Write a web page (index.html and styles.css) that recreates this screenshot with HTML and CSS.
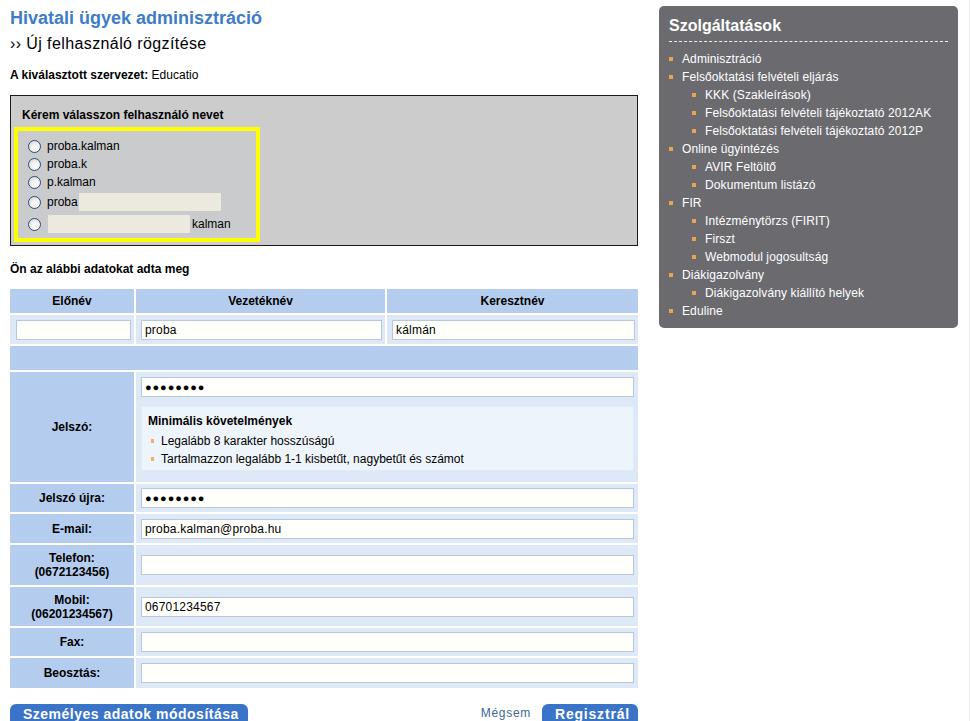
FILE: index.html
```html
<!DOCTYPE html>
<html lang="hu">
<head>
<meta charset="utf-8">
<title>Hivatali ügyek adminisztráció</title>
<link rel="stylesheet" href="styles.css">
</head>
<body>
<div class="page">
  <main class="main">
    <h1 class="title">Hivatali ügyek adminisztráció</h1>
    <h2 class="subtitle">›› Új felhasználó rögzítése</h2>
    <p class="org"><b>A kiválasztott szervezet:</b> Educatio</p>

    <section class="choose">
      <h3 class="choose-title">Kérem válasszon felhasználó nevet</h3>
      <div class="yellow">
        <div class="opt"><span class="radio"></span>proba.kalman</div>
        <div class="opt"><span class="radio"></span>proba.k</div>
        <div class="opt"><span class="radio"></span>p.kalman</div>
        <div class="opt opt-4"><span class="radio"></span>proba<span class="fill"></span></div>
        <div class="opt opt-5"><span class="radio"></span><span class="fill"></span>kalman</div>
      </div>
    </section>

    <h3 class="given">Ön az alábbi adatokat adta meg</h3>

    <div class="form">
      <div class="hd">Előnév</div>
      <div class="hd">Vezetéknév</div>
      <div class="hd">Keresztnév</div>

      <div class="cell row-name"><span class="inp"></span></div>
      <div class="cell row-name"><span class="inp">proba</span></div>
      <div class="cell row-name"><span class="inp">kálmán</span></div>

      <div class="spacer"></div>

      <div class="lbl row-pass">Jelszó:</div>
      <div class="val row-pass">
        <span class="inp dots">●●●●●●●●</span>
        <div class="req">
          <div class="req-title">Minimális követelmények</div>
          <ul class="req-list">
            <li>Legalább 8 karakter hosszúságú</li>
            <li>Tartalmazzon legalább 1-1 kisbetűt, nagybetűt és számot</li>
          </ul>
        </div>
      </div>

      <div class="lbl r28">Jelszó újra:</div>
      <div class="val r28"><span class="inp dots">●●●●●●●●</span></div>

      <div class="lbl r29">E-mail:</div>
      <div class="val r29"><span class="inp">proba.kalman@proba.hu</span></div>

      <div class="lbl r40">Telefon:<br>(0672123456)</div>
      <div class="val r40"><span class="inp"></span></div>

      <div class="lbl r39">Mobil:<br>(06201234567)</div>
      <div class="val r39"><span class="inp">06701234567</span></div>

      <div class="lbl r28">Fax:</div>
      <div class="val r28"><span class="inp"></span></div>

      <div class="lbl r30">Beosztás:</div>
      <div class="val r30"><span class="inp"></span></div>
    </div>

    <div class="actions">
      <span class="btn btn-wide">Személyes adatok módosítása</span>
      <span class="spring"></span>
      <a class="cancel">Mégsem</a>
      <span class="btn btn-reg">Regisztrál</span>
    </div>
  </main>

  <aside class="side">
    <h2 class="side-title">Szolgáltatások</h2>
    <ul class="menu">
      <li>Adminisztráció</li>
      <li>Felsőoktatási felvételi eljárás
        <ul>
          <li>KKK (Szakleírások)</li>
          <li>Felsőoktatási felvételi tájékoztató 2012AK</li>
          <li>Felsőoktatási felvételi tájékoztató 2012P</li>
        </ul>
      </li>
      <li>Online ügyintézés
        <ul>
          <li>AVIR Feltöltő</li>
          <li>Dokumentum listázó</li>
        </ul>
      </li>
      <li>FIR
        <ul>
          <li>Intézménytörzs (FIRIT)</li>
          <li>Firszt</li>
          <li>Webmodul jogosultság</li>
        </ul>
      </li>
      <li>Diákigazolvány
        <ul>
          <li>Diákigazolvány kiállító helyek</li>
        </ul>
      </li>
      <li>Eduline</li>
    </ul>
  </aside>
</div>
</body>
</html>
```

FILE: styles.css
```css
* { box-sizing: border-box; }
html, body { margin: 0; padding: 0; background: #fff; }
body {
  font-family: "Liberation Sans", Arial, sans-serif;
  font-size: 12px;
  color: #000;
  overflow: hidden;
}
.page {
  display: flex;
  align-items: flex-start;
  gap: 21px;
  padding: 6px 0 0 10px;
  height: 721px;
  border-right: 1px solid #ececec;
  width: 970px;
}
.main { width: 628px; flex: none; }

.title {
  margin: 2px 0 0;
  font-size: 18px;
  font-weight: bold;
  color: #3d7cc9;
  line-height: 21px;
}
.subtitle {
  margin: 5px 0 0;
  font-size: 16px;
  font-weight: normal;
  letter-spacing: 0.4px;
  line-height: 19px;
  color: #000;
}
.org { margin: 15px 0 0; line-height: 14px; }

.choose {
  margin-top: 13px;
  height: 151px;
  background: #cccccc;
  border: 1px solid #1a1a1a;
  padding: 12px 3px 0 3px;
}
.choose-title {
  margin: 0 0 0 8px;
  font-size: 12px;
  font-weight: bold;
  line-height: 14px;
}
.yellow {
  margin-top: 5px;
  width: 246px;
  height: 115px;
  border: 4px solid #ffff00;
  background: #c9cbcd;
  padding: 6px 0 0 10px;
}
.opt {
  display: flex;
  align-items: center;
  height: 18px;
  line-height: 14px;
}
.opt-4 { height: 20px; margin-top: 1px; }
.opt-5 { height: 22px; margin-top: 1px; }
.radio {
  width: 13px;
  height: 13px;
  border-radius: 50%;
  border: 1px solid #2f4a7a;
  background: radial-gradient(circle at 60% 65%, #ffffff 0%, #f2f2f2 40%, #cfcfcf 100%);
  margin-right: 6px;
  flex: none;
}
.fill {
  display: inline-block;
  width: 142px;
  height: 18px;
  background: #ece9df;
  margin: 0 2px 0 1px;
}

.given {
  margin: 16px 0 0;
  font-size: 12px;
  font-weight: bold;
  line-height: 14px;
}

.form {
  margin-top: 13px;
  display: grid;
  grid-template-columns: 124px 249px 251px;
  gap: 2px;
}
.hd {
  height: 24px;
  background: #b4cdee;
  font-weight: bold;
  display: flex;
  align-items: center;
  justify-content: center;
}
.cell {
  background: #dde9f7;
  padding: 0 3px 0 6px;
  display: flex;
  align-items: center;
}
.cell:nth-child(5), .cell:nth-child(6) { padding-left: 5px; }
.row-name { height: 29px; }
.spacer {
  grid-column: 1 / 4;
  height: 24px;
  background: #b4cdee;
}
.lbl {
  background: #b4cdee;
  font-weight: bold;
  text-align: center;
  display: flex;
  align-items: center;
  justify-content: center;
  line-height: 14px;
}
.val {
  grid-column: 2 / 4;
  background: #dde9f7;
  padding: 0 4px 0 5px;
  display: flex;
  flex-direction: column;
  justify-content: center;
}
.row-pass { height: 110px; }
.row-pass.val { justify-content: flex-start; padding-top: 5px; }
.r28 { height: 28px; }
.r29 { height: 29px; }
.r30 { height: 30px; }
.r39 { height: 39px; }
.r40 { height: 40px; }

.inp {
  display: flex;
  align-items: center;
  width: 100%;
  height: 20px;
  background: #fffffb;
  border: 1px solid #b9c7d9;
  padding: 0 3px;
  font-size: 12px;
  letter-spacing: 0.2px;
}
.dots { font-size: 11px; letter-spacing: 0.9px; }

.req {
  margin-top: 9px;
  width: 493px;
  height: 65px;
  background: #eef4fb;
  border: 1px solid #e2ebf6;
  padding: 7px 0 0 6px;
}
.req-title { font-weight: bold; line-height: 14px; }
.req-list {
  list-style: none;
  margin: 4px 0 0;
  padding: 0;
}
.req-list li {
  position: relative;
  padding-left: 13px;
  line-height: 18px;
}
.req-list li::before {
  content: "";
  position: absolute;
  left: 3px;
  top: 7px;
  width: 3px;
  height: 4px;
  background: #f0b060;
}

.actions {
  margin-top: 16px;
  display: flex;
  align-items: flex-start;
  height: 20px;
}
.btn {
  display: inline-block;
  white-space: nowrap;
  background: #3a74c9;
  color: #fff;
  font-weight: bold;
  font-size: 14px;
  letter-spacing: 0.5px;
  line-height: 18px;
  height: 22px;
  padding: 1px 0 0 13px;
  border-radius: 6px 6px 0 0;
}
.btn-wide { width: 238px; }
.btn-reg { width: 96px; padding-left: 13px; letter-spacing: 0.8px; }
.spring { flex: 1; }
.cancel {
  color: #3a6796;
  font-size: 12px;
  letter-spacing: 0.7px;
  line-height: 14px;
  margin: 2px 11px 0 0;
}

.side {
  width: 299px;
  height: 322px;
  flex: none;
  background: #6b6b6f;
  border-radius: 5px;
  color: #fff;
  padding: 10px 10px 0 10px;
}
.side-title {
  margin: 0;
  font-size: 16px;
  font-weight: bold;
  line-height: 20px;
  padding-bottom: 5px;
  border-bottom: 1px dashed #f0f0f0;
}
.menu, .menu ul {
  list-style: none;
  margin: 0;
  padding: 0;
}
.menu { margin-top: 8px; }
.menu li {
  position: relative;
  padding-left: 13px;
  line-height: 18px;
  font-size: 12px;
  letter-spacing: 0.1px;
}
.menu li::before {
  content: "";
  position: absolute;
  left: 0;
  top: 7px;
  width: 4px;
  height: 4px;
  background: #e5a552;
}
.menu ul { margin-left: 10px; }
.menu ul li { padding-left: 13px; }
```
